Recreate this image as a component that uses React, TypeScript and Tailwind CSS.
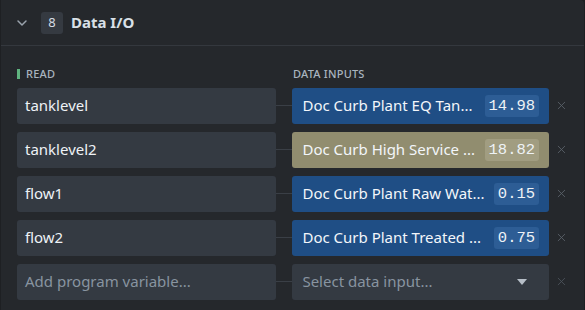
import { ChevronDown, X } from "lucide-react";

type Row = { name: string; input: string; value: string; tone: "blue" | "tan" };

const rows: Row[] = [
  { name: "tanklevel", input: "Doc Curb Plant EQ Tan...", value: "14.98", tone: "blue" },
  { name: "tanklevel2", input: "Doc Curb High Service ...", value: "18.82", tone: "tan" },
  { name: "flow1", input: "Doc Curb Plant Raw Wat...", value: "0.15", tone: "blue" },
  { name: "flow2", input: "Doc Curb Plant Treated ...", value: "0.75", tone: "blue" },
];

const font = { fontFamily: "'Noto Sans', Roboto, sans-serif" };
const mono = { fontFamily: "'Liberation Mono', 'DejaVu Sans Mono', monospace" };

// Data I/O section: program variables on the left wired to live data inputs on the right
export default function App() {
  return (
    <div className="h-[310px] w-[585px] overflow-hidden bg-[#1d1f22]" style={font}>
      <div className="h-[330px] w-[584px] rounded-tr-[4px] border-l border-[#1e2023] bg-[#25282c]">
        <div className="flex h-[46px] items-center gap-[11px] border-b border-[#34383e] pl-[13px]">
          <ChevronDown className="h-4 w-4 text-[#9aa3ad]" strokeWidth={2.2} />
          <div className="flex items-center gap-[8px]">
            <span className="flex h-[22px] w-[22px] items-center justify-center rounded-[3px] bg-[#353a41] text-[13px] text-[#d6dde4]">
              8
            </span>
            <span className="text-[15px] font-bold text-[#d9e0e7]">Data I/O</span>
          </div>
        </div>

        <div className="px-[16px] pt-[20px]">
          <div className="grid grid-cols-[260px_276px] gap-x-[16px]">
            <div className="flex items-center gap-[6px] text-[11px] font-medium tracking-[0.02em] text-[#a9b4bf]">
              <span className="h-[10px] w-[3px] bg-[#5fb37f]" />
              READ
            </div>
            <div className="text-[11px] font-medium tracking-[0.02em] text-[#a9b4bf]">DATA INPUTS</div>
          </div>

          <div className="mt-[5px] flex flex-col gap-[8px]">
            {rows.map((r) => (
              <div key={r.name} className="flex h-[36px] items-center">
                <div className="flex h-full w-[260px] items-center rounded-[3px] bg-[#343a42] px-[8px] text-[15px] text-[#eef2f6]">
                  {r.name}
                </div>
                <div className="h-px w-[17px] bg-[#3a3f46]" />
                <div
                  className={
                    "flex h-full w-[258px] items-center justify-between gap-2 rounded-[3px] pl-[10px] pr-[10px] " +
                    (r.tone === "tan" ? "bg-[#918d6f]" : "bg-[#1f4e85]")
                  }
                >
                  <span className="min-w-0 truncate text-[15px] text-[#f3f6fa]">{r.input}</span>
                  <span
                    className={
                      "shrink-0 rounded-[3px] px-[4px] text-[15.5px] leading-[22px] text-[#eef2f6] " +
                      (r.tone === "tan" ? "bg-[#a19d81]" : "bg-[#2d5d95]")
                    }
                    style={mono}
                  >
                    {r.value}
                  </span>
                </div>
                <X className="ml-[6px] h-[13px] w-[13px] text-[#5c636b]" strokeWidth={1.6} />
              </div>
            ))}

            <div className="flex h-[36px] items-center">
              <div className="flex h-full w-[260px] items-center rounded-[3px] bg-[#343a42] px-[8px] text-[15px] text-[#8894a0]">
                Add program variable...
              </div>
              <div className="h-px w-[17px] bg-[#3a3f46]" />
              <div className="flex h-full w-[258px] items-center justify-between rounded-[3px] bg-[#343a42] pl-[10px] pr-[22px] text-[15px] text-[#8894a0]">
                <span>Select data input...</span>
                <svg width="10" height="6" viewBox="0 0 10 6">
                  <path d="M0 0h10L5 6z" fill="#b6bec7" />
                </svg>
              </div>
              <X className="ml-[6px] h-[13px] w-[13px] text-[#4d545c]" strokeWidth={1.6} />
            </div>
          </div>
        </div>
      </div>
    </div>
  );
}
